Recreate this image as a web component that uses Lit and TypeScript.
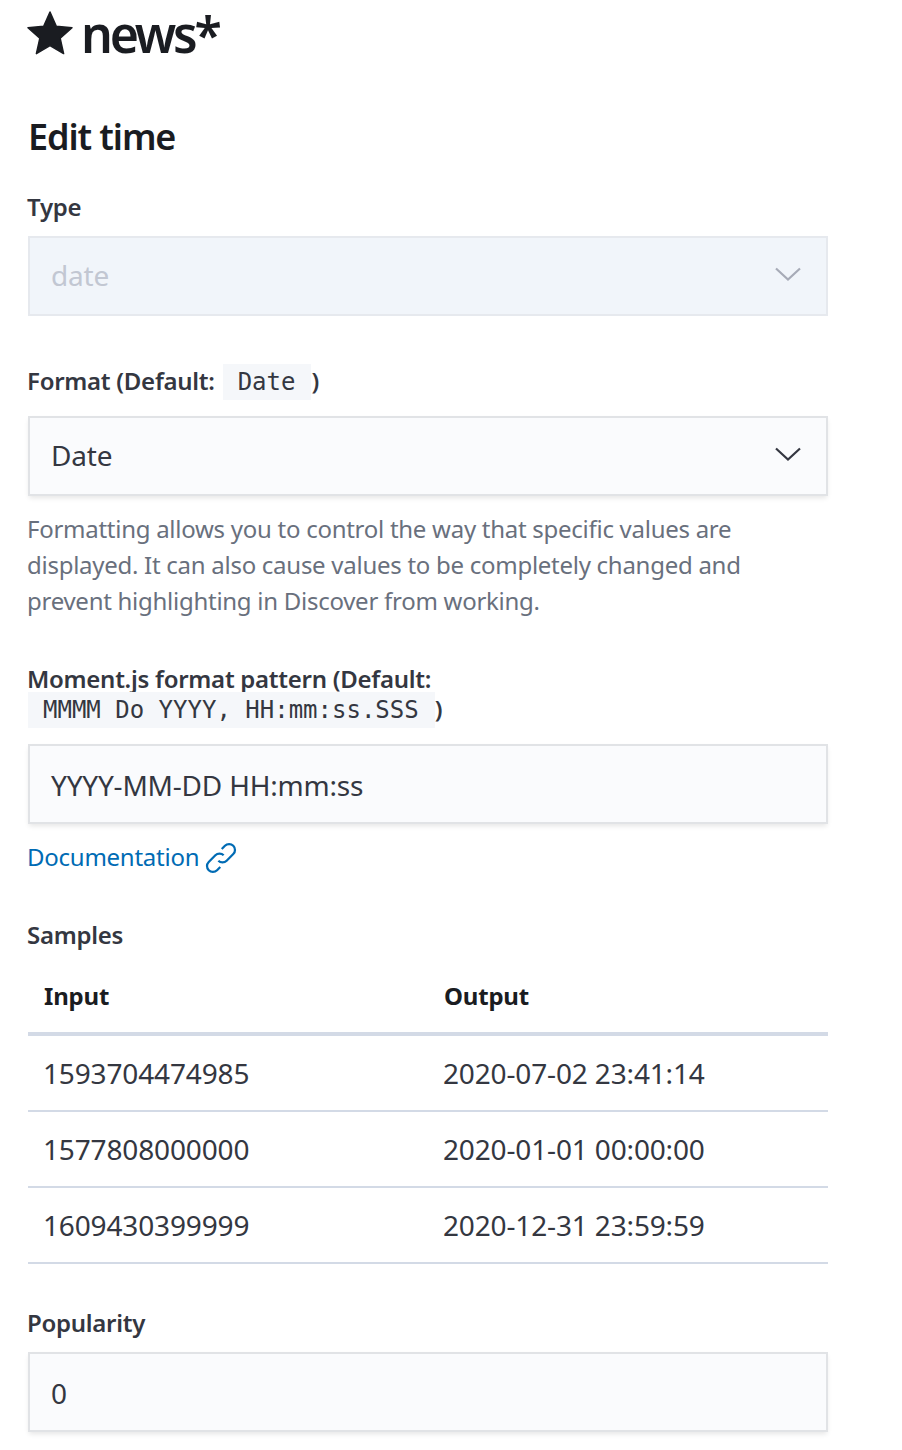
import { LitElement, html, css } from "lit";
import { customElement } from "lit/decorators.js";

const chevron = (disabled: boolean) => html`<svg class="chev ${disabled ? "dis" : ""}" width="28" height="16" viewBox="0 0 28 16" fill="none"><path d="M2 2.5 L14 13.5 L26 2.5" stroke="currentColor" stroke-width="2.2"/></svg>`;

@customElement("app-root")
export class AppRoot extends LitElement {
  static styles = css`
    :host { display: block; width: 902px; height: 1450px; overflow: hidden; background: #fff; font-family: "Noto Sans", "Open Sans", sans-serif; color: #343741; }
    .page { padding: 0 74px 0 28px; width: 800px; }
    .title { display: flex; align-items: center; gap: 8px; height: 72px; color: #1a1c21; font-size: 50px; font-weight: 600; letter-spacing: -3.2px; line-height: 72px; }
    .title svg { flex: none; margin-left: -1px; margin-top: -6px; }
    .title span { margin-top: -4px; }
    h2 { margin: 29px 0 0; height: 72px; font-size: 36px; line-height: 72px; font-weight: 600; color: #1a1c21; letter-spacing: -1.1px; }
    .label { font-size: 24px; line-height: 30px; font-weight: 600; color: #343741; letter-spacing: -0.27px; margin-left: -1px; }
    .label.has-code { padding-bottom: 6px; }
    .field { display: flex; align-items: center; justify-content: space-between; box-sizing: border-box; height: 80px; padding: 0 24px 2px 21px; margin-top: 14px; font-size: 28px; letter-spacing: -0.2px; border: 2px solid #e1e3e6; background: #fafbfd; box-shadow: 0 3px 5px -1px rgba(0,0,0,.1); color: #343741; }
    .field.plain { padding: 2px 24px 0 21px; }
    .field.dis { background: #f1f5fa; border-color: #e6e9ee; box-shadow: none; color: #c2c7d2; }
    .chev { color: #343741; margin-top: -2px; }
    .chev.dis { color: #a7abb7; }
    code { font-family: "DejaVu Sans Mono", monospace; font-size: 24px; line-height: 0; font-weight: 400; background: #f5f7fa; padding: 4px 16px 4px 15px; letter-spacing: 0; margin-left: 1px; }
    code.shift { margin-left: 2px; }
    .help { margin: 15px 0 0 -1px; font-size: 24px; line-height: 36px; color: #69707d; letter-spacing: -0.27px; }
    .link { display: flex; align-items: center; gap: 6px; margin: 15px 0 0 -1px; font-size: 24px; line-height: 36px; letter-spacing: -0.25px; color: #006bb4; }
    .link svg { margin-top: 1px; }
    table { width: 800px; border-collapse: separate; border-spacing: 0; table-layout: fixed; margin-top: 16px; }
    th { text-align: left; font-size: 24px; font-weight: 700; color: #1a1c21; height: 70px; padding: 0 16px 8px; border-bottom: 4px solid #d3dae6; letter-spacing: -0.2px; box-sizing: border-box; }
    td { font-size: 28px; height: 76px; padding: 0 15px; border-bottom: 2px solid #d3dae6; color: #343741; letter-spacing: -0.15px; box-sizing: border-box; }
    .m-type { margin-top: 19px; }
    .m-format { margin-top: 50px; }
    .m-moment { margin-top: 45px; }
    .m-samples { margin-top: 45px; }
    .m-pop { margin-top: 44px; }
  `;

  render() {
    return html`<div class="page">
      <div class="title">
        <svg width="46" height="44" viewBox="0 0 46 44"><path fill="#1a1c21" d="M23 1 L29.3 15.3 L45 16.8 L33.2 27.3 L36.6 42.6 L23 34.6 L9.4 42.6 L12.8 27.3 L1 16.8 L16.7 15.3 Z" stroke="#1a1c21" stroke-width="1.5" stroke-linejoin="round"/></svg>
        <span>news*</span>
      </div>
      <h2>Edit time</h2>
      <div class="label m-type">Type</div>
      <div class="field dis"><span>date</span>${chevron(true)}</div>
      <div class="label has-code m-format">Format (Default: <code class="shift">Date</code>)</div>
      <div class="field"><span>Date</span>${chevron(false)}</div>
      <p class="help">Formatting allows you to control the way that specific values are displayed. It can also cause values to be completely changed and prevent highlighting in Discover from working.</p>
      <div class="label has-code m-moment">Moment.js format pattern (Default:<br><code>MMMM Do YYYY, HH:mm:ss.SSS</code>)</div>
      <div class="field plain"><span>YYYY-MM-DD HH:mm:ss</span></div>
      <div class="link">Documentation
        <svg width="32" height="32" viewBox="1 1 30 30" fill="none" stroke="#006bb4" stroke-width="2.1"><path d="M13.5 18.5 a5.5 5.5 0 0 0 7.8 0 l6.2-6.2 a5.5 5.5 0 0 0 -7.8-7.8 l-3 3"/><path d="M18.5 13.5 a5.5 5.5 0 0 0 -7.8 0 l-6.2 6.2 a5.5 5.5 0 0 0 7.8 7.8 l3-3"/></svg>
      </div>
      <div class="label m-samples">Samples</div>
      <table>
        <thead><tr><th>Input</th><th>Output</th></tr></thead>
        <tbody>
          <tr><td>1593704474985</td><td>2020-07-02 23:41:14</td></tr>
          <tr><td>1577808000000</td><td>2020-01-01 00:00:00</td></tr>
          <tr><td>1609430399999</td><td>2020-12-31 23:59:59</td></tr>
        </tbody>
      </table>
      <div class="label m-pop">Popularity</div>
      <div class="field plain"><span>0</span></div>
    </div>`;
  }
}
